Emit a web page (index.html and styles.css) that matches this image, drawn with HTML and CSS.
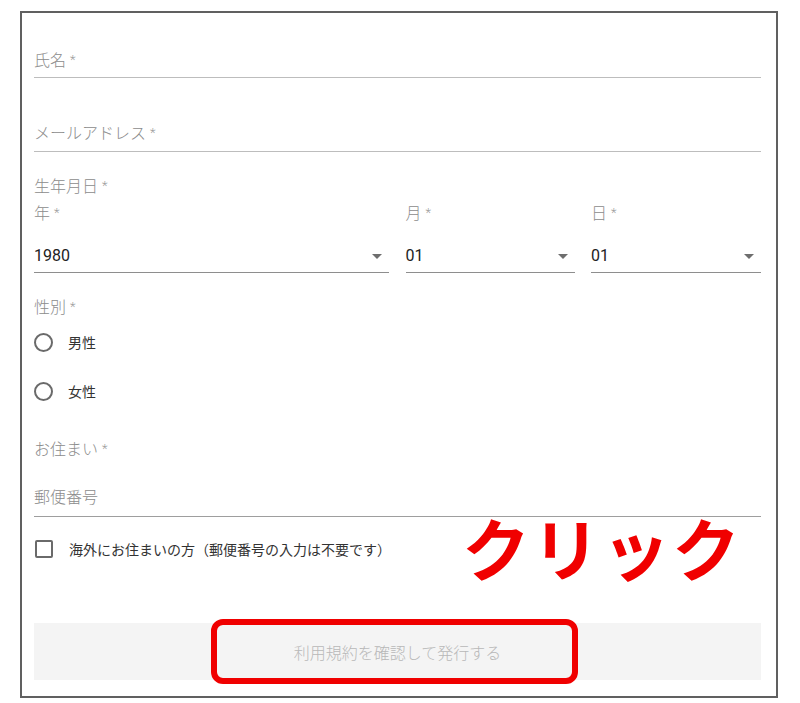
FILE: index.html
```html
<!DOCTYPE html>
<html lang="ja">
<head>
<meta charset="utf-8">
<link rel="stylesheet" href="styles.css">
</head>
<body>
<div class="frame">
  <div class="field f1"><span class="label">氏名 <span class="ast">*</span></span></div>
  <div class="field f2"><span class="label">メールアドレス <span class="ast">*</span></span></div>
  <div class="group-label">生年月日 <span class="ast">*</span></div>
  <div class="date-row">
    <div class="select">
      <div class="sel-label">年 <span class="ast">*</span></div>
      <div class="sel-value"><span>1980</span><span class="caret"></span></div>
    </div>
    <div class="select">
      <div class="sel-label">月 <span class="ast">*</span></div>
      <div class="sel-value"><span>01</span><span class="caret"></span></div>
    </div>
    <div class="select">
      <div class="sel-label">日 <span class="ast">*</span></div>
      <div class="sel-value"><span>01</span><span class="caret"></span></div>
    </div>
  </div>
  <div class="group-label gender">性別 <span class="ast">*</span></div>
  <div class="radio r1"><span class="circle"></span><span class="opt">男性</span></div>
  <div class="radio r2"><span class="circle"></span><span class="opt">女性</span></div>
  <div class="group-label address">お住まい <span class="ast">*</span></div>
  <div class="field zip"><span class="label">郵便番号</span></div>
  <div class="check"><span class="box"></span><span class="opt">海外にお住まいの方（郵便番号の入力は不要です）</span></div>
  <div class="button">利用規約を確認して発行する</div>
  <div class="click-note">クリック</div>
  <div class="highlight"></div>
</div>
</body>
</html>
```
FILE: styles.css
```css
html, body {
  margin: 0;
  padding: 0;
  background: #fff;
}
body {
  font-family: Roboto, "Noto Sans CJK JP", sans-serif;
  color: #333;
}
.frame {
  position: relative;
  margin: 11px 0 0 20px;
  width: 727px;
  height: 683px;
  border: 2px solid #606060;
  padding: 0 15px 0 12px;
  display: flex;
  flex-direction: column;
}
.label, .group-label, .sel-label {
  display: block;
  font-size: 16px;
  line-height: 24px;
  height: 24px;
  color: #8c8c8c;
  font-weight: 300;
}
.ast {
  font-size: 13px;
  line-height: 0;
  vertical-align: 2px;
  color: #9a9a9a;
}
.field {
  border-bottom: 1px solid #bdbdbd;
}
.f1 { padding: 36px 0 4px; }
.f2 { padding: 44px 0 5px; }
.group-label { margin-top: 23px; }
.date-row {
  display: grid;
  grid-template-columns: 355px 169px 170px;
  column-gap: 16.5px;
  margin-top: 3px;
}
.sel-value {
  margin-top: 18px;
  padding: 0 0 4px;
  border-bottom: 1px solid #8e8e8e;
  display: flex;
  justify-content: space-between;
  align-items: center;
  font-size: 16px;
  line-height: 24px;
  height: 24px;
  color: #222;
}
.caret {
  width: 0;
  height: 0;
  border-left: 5px solid transparent;
  border-right: 5px solid transparent;
  border-top: 5px solid #6e6e6e;
  margin-right: 7px;
}
.gender { margin-top: 23px; }
.radio {
  display: flex;
  align-items: center;
  height: 24px;
}
.r1 { margin-top: 10px; }
.r2 { margin-top: 25px; }
.circle {
  width: 15px;
  height: 15px;
  border: 2px solid #6a6a6a;
  border-radius: 50%;
}
.opt {
  font-size: 14px;
  color: #333;
  margin-left: 15px;
}
.address { margin-top: 35px; }
.zip { margin-top: 24px; padding-bottom: 6px; border-bottom-color: #9e9e9e; }
.check {
  display: flex;
  align-items: center;
  height: 24px;
  margin-top: 20px;
}
.box {
  width: 14px;
  height: 14px;
  border: 2px solid #6a6a6a;
  border-radius: 2px;
  margin-left: 1px;
}
.check .opt { margin-left: 16px; }
.button {
  margin-top: 62px;
  height: 57px;
  background: #f4f4f4;
  color: #b8b8b8;
  font-size: 16px;
  font-weight: 300;
  display: flex;
  align-items: center;
  justify-content: center;
}
.click-note {
  position: absolute;
  left: 440px;
  top: 484px;
  font-family: "Noto Sans CJK JP", sans-serif;
  font-weight: 700;
  font-size: 68px;
  line-height: 100px;
  letter-spacing: 2px;
  color: #f00000;
}
.highlight {
  position: absolute;
  left: 189px;
  top: 606px;
  width: 355px;
  height: 53px;
  border: 6px solid #f00000;
  border-radius: 12px;
}
```
